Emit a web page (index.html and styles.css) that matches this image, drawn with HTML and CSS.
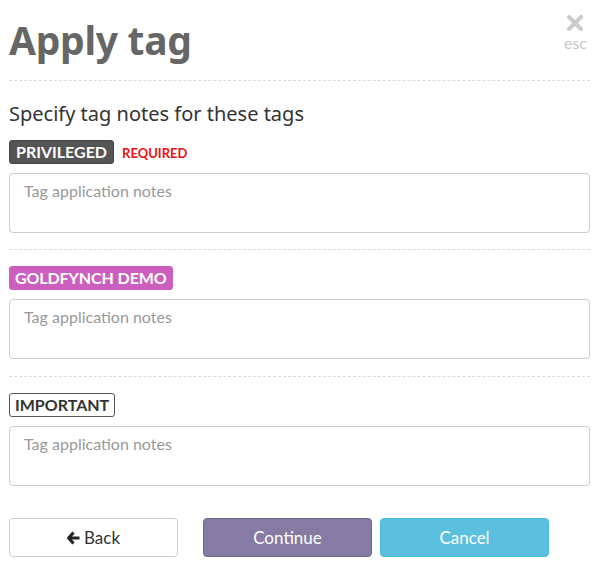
FILE: index.html
```html
<!DOCTYPE html>
<html>
<head>
<meta charset="utf-8">
<link rel="stylesheet" href="styles.css">
</head>
<body>
<div class="modal">
  <div class="header">
    <h1 class="title">Apply tag</h1>
    <div class="close">
      <svg class="close-x" width="16" height="16" viewBox="0 0 16 16"><path d="M2 2 L14 14 M14 2 L2 14" stroke="#cccccc" stroke-width="4" stroke-linecap="round"/></svg>
      <span class="esc">esc</span>
    </div>
  </div>
  <div class="sep"></div>
  <p class="lead">Specify tag notes for these tags</p>
  <div class="section">
    <div class="tagrow"><span class="tag tag-dark">PRIVILEGED</span><span class="required">REQUIRED</span></div>
    <textarea class="notes" placeholder="Tag application notes"></textarea>
  </div>
  <div class="sep"></div>
  <div class="section section-mid">
    <div class="tagrow"><span class="tag tag-pink">GOLDFYNCH DEMO</span></div>
    <textarea class="notes" placeholder="Tag application notes"></textarea>
  </div>
  <div class="sep"></div>
  <div class="section">
    <div class="tagrow"><span class="tag tag-outline">IMPORTANT</span></div>
    <textarea class="notes" placeholder="Tag application notes"></textarea>
  </div>
  <div class="actions">
    <button class="btn btn-back"><svg width="13" height="14" viewBox="0 0 13 14"><path d="M6.5 1.5 L1.6 7 L6.5 12.5 M2 7 H12.5" stroke="#222" stroke-width="3" fill="none" stroke-linejoin="round"/></svg>Back</button>
    <button class="btn btn-continue">Continue</button>
    <button class="btn btn-cancel">Cancel</button>
  </div>
</div>
</body>
</html>
```
FILE: styles.css
```css
html, body {
  margin: 0;
  padding: 0;
  background: #ffffff;
}
body {
  font-family: "Lato", "Liberation Sans", sans-serif;
  color: #333;
}
.modal {
  width: 581px;
  padding: 0 10px 0 9px;
}
.header {
  display: flex;
  justify-content: space-between;
  align-items: flex-start;
  height: 80px;
}
.title {
  margin: 14px 0 0 0;
  font-family: "Noto Sans", sans-serif;
  font-weight: 700;
  font-size: 39px;
  line-height: 52px;
  color: #666;
  letter-spacing: -0.3px;
}
.close {
  display: flex;
  flex-direction: column;
  align-items: center;
  margin-top: 15px;
  margin-right: 3px;
}
.close-x {
  display: block;
}
.esc {
  font-family: "Lato", sans-serif;
  font-size: 16px;
  line-height: 16px;
  color: #c8c8c8;
  margin-top: 4px;
}
.sep {
  border-top: 1px dashed #dadada;
  height: 0;
}
.lead {
  margin: 21px 0 14px 0;
  font-family: "Noto Sans", sans-serif;
  font-size: 20px;
  line-height: 24px;
  color: #333;
}
.section {
  display: flex;
  flex-direction: column;
  gap: 9px;
  padding-bottom: 16px;
}
.sep + .section {
  padding-top: 16px;
}
.section-mid {
  padding-bottom: 17px;
}
.tagrow {
  display: flex;
  align-items: center;
  gap: 8px;
}
.tag {
  display: inline-block;
  font-family: "Lato", sans-serif;
  font-weight: 700;
  font-size: 16px;
  line-height: 20px;
  padding: 1px 6px;
  border-radius: 3px;
  border: 1px solid transparent;
}
.tag-dark {
  background: #555555;
  border-color: #444;
  color: #fff;
}
.tag-pink {
  background: #cc5fbe;
  border-color: #cc5fbe;
  color: #fff;
  padding: 1px 5px;
  letter-spacing: -0.1px;
}
.tag-outline {
  background: #fff;
  border-color: #555;
  color: #333;
  padding: 1px 5px;
}
.required {
  font-weight: 700;
  font-size: 13px;
  color: #ee1111;
  padding-top: 2px;
}
.notes {
  display: block;
  box-sizing: border-box;
  width: 100%;
  height: 60px;
  margin: 0;
  resize: none;
  border: 1px solid #cccccc;
  border-radius: 4px;
  padding: 7px 14px;
  font-family: "Lato", sans-serif;
  font-size: 16px;
  line-height: 20px;
}
.notes::placeholder {
  color: #999;
}
.actions {
  display: flex;
  margin-top: 16px;
}
.btn {
  box-sizing: border-box;
  width: 169px;
  height: 39px;
  border-radius: 4px;
  border: 1px solid #ccc;
  font-family: "Lato", sans-serif;
  font-size: 17px;
  display: flex;
  align-items: center;
  justify-content: center;
  gap: 4px;
  padding: 0;
}
.btn-back {
  background: #fff;
  color: #333;
}
.btn-continue {
  margin-left: 25px;
  background: #857ba3;
  border-color: #6f6690;
  color: #fff;
}
.btn-cancel {
  margin-left: 8px;
  background: #5bc0de;
  border-color: #46b8da;
  color: #fff;
}
```
